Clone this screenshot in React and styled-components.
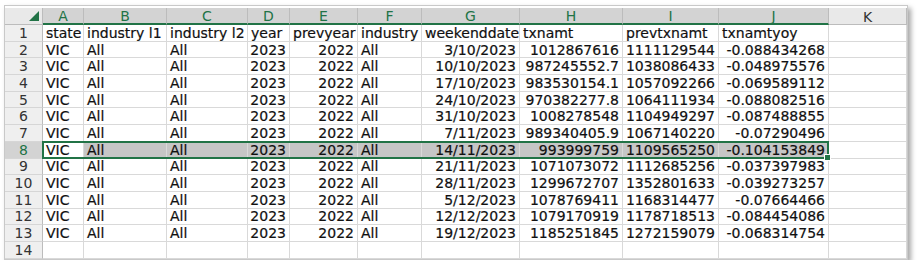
import React from "react";
import styled, { createGlobalStyle } from "styled-components";

const COLS = [
  { key: "A", w: 41 },
  { key: "B", w: 83 },
  { key: "C", w: 81 },
  { key: "D", w: 42 },
  { key: "E", w: 68 },
  { key: "F", w: 64 },
  { key: "G", w: 98 },
  { key: "H", w: 103 },
  { key: "I", w: 96 },
  { key: "J", w: 110 },
  { key: "K", w: 78 },
];
const ROWHEAD_W = 38;
const HEAD_H = 17;
const ROW_H = 16.7;
const PAD_TOP = 2;
const SEL_ROW = 8;

const header = ["state", "industry l1", "industry l2", "year", "prevyear", "industry", "weekenddate", "txnamt", "prevtxnamt", "txnamtyoy"];
const data = [
  ["3/10/2023", "1012867616", "1111129544", "-0.088434268"],
  ["10/10/2023", "987245552.7", "1038086433", "-0.048975576"],
  ["17/10/2023", "983530154.1", "1057092266", "-0.069589112"],
  ["24/10/2023", "970382277.8", "1064111934", "-0.088082516"],
  ["31/10/2023", "1008278548", "1104949297", "-0.087488855"],
  ["7/11/2023", "989340405.9", "1067140220", "-0.07290496"],
  ["14/11/2023", "993999759", "1109565250", "-0.104153849"],
  ["21/11/2023", "1071073072", "1112685256", "-0.037397983"],
  ["28/11/2023", "1299672707", "1352801633", "-0.039273257"],
  ["5/12/2023", "1078769411", "1168314477", "-0.07664466"],
  ["12/12/2023", "1079170919", "1178718513", "-0.084454086"],
  ["19/12/2023", "1185251845", "1272159079", "-0.068314754"],
];
const NUMERIC = [false, false, false, true, true, false, true, true, true, true];

const GlobalStyle = createGlobalStyle`
  html, body { margin: 0; padding: 0; background: #ffffff; }
  body { font-family: "DejaVu Sans", Verdana, sans-serif; }
`;

const Page = styled.div`
  padding: 5px 0 0 4px;
`;

const Frame = styled.div`
  position: relative;
  display: inline-block;
  border: 1px solid #c9c9c9;
  padding-top: ${PAD_TOP}px;
  background: #ffffff;
  box-shadow: 3px 3px 5px rgba(0, 0, 0, 0.35);
`;

const Grid = styled.div`
  display: grid;
  grid-template-columns: ${ROWHEAD_W}px ${COLS.map((c) => c.w + "px").join(" ")};
  grid-template-rows: ${HEAD_H}px repeat(14, ${ROW_H}px);
  font-size: 14px;
  color: #111111;
  -webkit-text-stroke: 0.2px currentColor;
`;

const Corner = styled.div`
  position: relative;
  background: #e9e9e9;
  border-right: 1px solid #bcbcbc;
  border-bottom: 1px solid #bcbcbc;
  box-sizing: border-box;
  &::after {
    content: "";
    position: absolute;
    right: 3px;
    bottom: 3px;
    width: 0;
    height: 0;
    border-left: 10px solid transparent;
    border-bottom: 10px solid #217346;
  }
`;

const ColHead = styled.div`
  box-sizing: border-box;
  display: flex;
  align-items: center;
  justify-content: center;
  background: ${(p) => (p.$sel ? "#d3d3d3" : "#e9e9e9")};
  color: ${(p) => (p.$sel ? "#217346" : "#333333")};
  border-right: 1px solid #bcbcbc;
  border-bottom: ${(p) => (p.$sel ? "2px solid #217346" : "1px solid #bcbcbc")};
  line-height: 1;
  padding-top: 1px;
  -webkit-text-stroke: 0;
`;

const RowHead = styled.div`
  box-sizing: border-box;
  display: flex;
  align-items: center;
  justify-content: center;
  background: ${(p) => (p.$sel ? "#d3d3d3" : "#efefef")};
  color: ${(p) => (p.$sel ? "#217346" : "#333333")};
  border-right: 1px solid #bcbcbc;
  border-bottom: 1px solid #d6d6d6;
  line-height: 1;
  -webkit-text-stroke: 0;
`;

const Cell = styled.div`
  box-sizing: border-box;
  display: flex;
  align-items: center;
  justify-content: ${(p) => (p.$num ? "flex-end" : "flex-start")};
  padding: 0 3px;
  white-space: nowrap;
  overflow: hidden;
  background: ${(p) => (p.$hl ? "#c6c6c6" : "#ffffff")};
  border-right: 1px solid #d9d9d9;
  border-bottom: 1px solid #d9d9d9;
  line-height: 1;
`;

const Selection = styled.div`
  position: absolute;
  pointer-events: none;
  left: ${ROWHEAD_W - 1}px;
  top: ${PAD_TOP + HEAD_H + (SEL_ROW - 1) * ROW_H - 1}px;
  width: ${COLS.slice(0, 10).reduce((s, c) => s + c.w, 0) + 1}px;
  height: ${ROW_H + 1}px;
  border: 2px solid #217346;
  box-sizing: border-box;
`;

const FillHandle = styled.div`
  position: absolute;
  right: -4px;
  bottom: -4px;
  width: 5px;
  height: 5px;
  background: #217346;
  border: 1px solid #ffffff;
`;

function rowValues(r) {
  if (r === 1) return header;
  if (r === 14) return Array(10).fill("");
  const d = data[r - 2];
  return ["VIC", "All", "All", "2023", "2022", "All", ...d];
}

export default function App() {
  const rows = [];
  for (let r = 1; r <= 14; r++) {
    const vals = rowValues(r);
    rows.push(
      <RowHead key={"rh" + r} $sel={r === SEL_ROW}>
        {r}
      </RowHead>
    );
    vals.forEach((v, i) => {
      rows.push(
        <Cell key={r + "-" + i} $num={r !== 1 && NUMERIC[i]} $hl={r === SEL_ROW && i > 0}>
          {v}
        </Cell>
      );
    });
    rows.push(<Cell key={r + "-K"} />);
  }
  return (
    <>
      <GlobalStyle />
      <Page>
        <Frame>
          <Grid>
            <Corner />
            {COLS.map((c) => (
              <ColHead key={c.key} $sel={c.key !== "K"}>
                {c.key}
              </ColHead>
            ))}
            {rows}
          </Grid>
          <Selection>
            <FillHandle />
          </Selection>
        </Frame>
      </Page>
    </>
  );
}
